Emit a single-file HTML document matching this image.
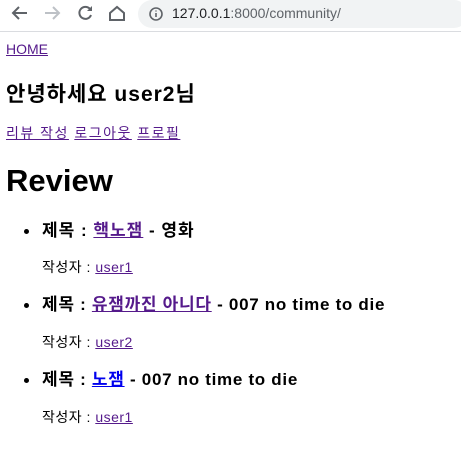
<!DOCTYPE html>
<html><head><meta charset="utf-8"><style>
body{margin:0;width:461px;height:470px;background:#fff;font-family:"Liberation Sans","Noto Sans CJK KR",sans-serif;color:#000;position:relative;overflow:hidden}
.bar{position:absolute;left:0;top:0;width:461px;height:31px;background:#fff;border-bottom:1px solid #dadce0}
.url{position:absolute;left:138px;top:0;width:330px;height:28px;background:#f1f3f4;border-radius:14px}
.url span{position:absolute;left:34px;top:5px;font-size:14px;color:#202124}
.a{position:absolute;white-space:nowrap}
a{color:#551a8b;text-decoration:underline}
a.b{color:#0000ee}
.t{font-size:17px;font-weight:bold;letter-spacing:0.7px}
.w{font-size:14px;letter-spacing:0.5px}
.dot{position:absolute;width:5px;height:5px;border-radius:50%;background:#000}
</style></head><body>
<div class="bar">
<svg width="461" height="31" style="position:absolute;left:0;top:0">
<path d="M27 13H13M19 7l-6 6 6 6" stroke="#5f6368" stroke-width="2" fill="none"/>
<path d="M45 13h14M53 7l6 6-6 6" stroke="#bdc1c6" stroke-width="2" fill="none"/>
<path d="M90 9a6 6 0 1 0 1 6" stroke="#5f6368" stroke-width="2" fill="none"/><path d="M92 6v5h-5z" fill="#5f6368"/>
<path d="M110 13l7-6 7 6v7h-14z" stroke="#5f6368" stroke-width="2" fill="none"/>
</svg>
<div class="url"><svg width="20" height="28" style="position:absolute;left:10px;top:0"><circle cx="8" cy="14" r="6" stroke="#5f6368" stroke-width="1.6" fill="none"/><path d="M8 13v4M8 10.5v1" stroke="#5f6368" stroke-width="1.6"/></svg><span>127.0.0.1<span style="position:static;color:#5f6368">:8000/community/</span></span></div>
</div>
<div class="a" style="left:6px;top:41px;font-size:14px"><a href="#">HOME</a></div>
<div class="a" style="left:6px;top:78px;font-size:21px;font-weight:bold;letter-spacing:1px">안녕하세요 user2님</div>
<div class="a" style="left:6px;top:123px;font-size:14px;letter-spacing:1.5px"><a href="#">리뷰 작성</a> <a href="#">로그아웃</a> <a href="#">프로필</a></div>
<div class="a" style="left:6px;top:163px;font-size:31px;font-weight:bold">Review</div>
<div class="dot" style="left:24px;top:229px"></div>
<div class="a t" style="left:42px;top:216px;letter-spacing:1px">제목 : <a href="#">핵노잼</a> - 영화</div>
<div class="a w" style="left:42px;top:257px">작성자 : <a href="#">user1</a></div>
<div class="dot" style="left:24px;top:303px"></div>
<div class="a t" style="left:42px;top:290px">제목 : <a href="#">유잼까진 아니다</a> - 007 no time to die</div>
<div class="a w" style="left:42px;top:332px">작성자 : <a href="#">user2</a></div>
<div class="dot" style="left:24px;top:378px"></div>
<div class="a t" style="left:42px;top:365px">제목 : <a class="b" href="#">노잼</a> - 007 no time to die</div>
<div class="a w" style="left:42px;top:407px">작성자 : <a href="#">user1</a></div>
</body></html>
